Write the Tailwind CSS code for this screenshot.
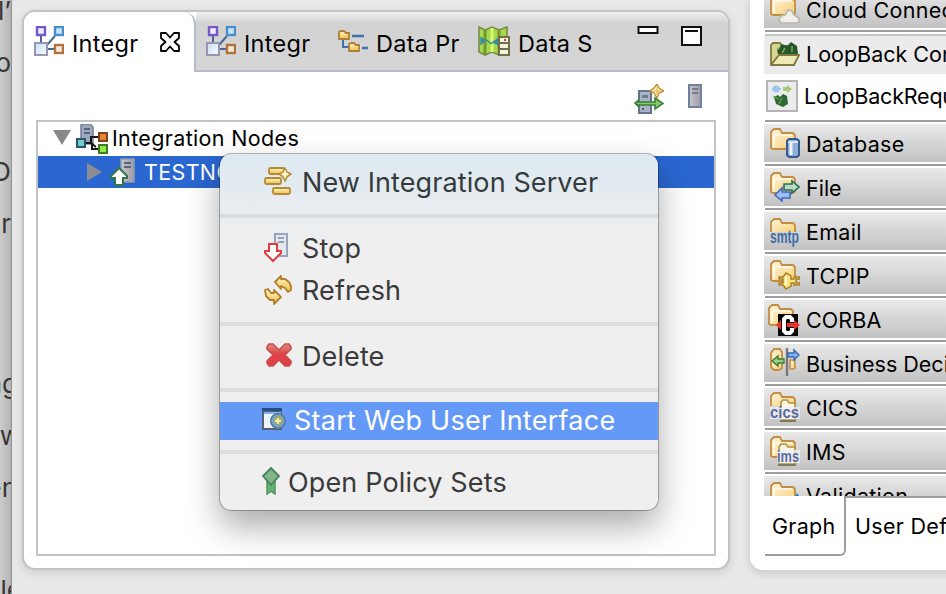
<!DOCTYPE html>
<html lang="en">
<head>
<meta charset="utf-8">
<title>Integration Nodes</title>
<script src="https://cdn.jsdelivr.net/npm/@tailwindcss/browser@4"></script>
</head>
<body class="bg-[#e8e8e8]">
<svg width="0" height="0" class="absolute">
  <defs>
    <linearGradient id="gold" x1="0" y1="0" x2="0" y2="1"><stop offset="0" stop-color="#fff8c8"/><stop offset="1" stop-color="#eebd4c"/></linearGradient>
    <linearGradient id="fold" x1="0" y1="0" x2="1" y2="1"><stop offset="0" stop-color="#fff5dc"/><stop offset="1" stop-color="#f5d078"/></linearGradient>
    <linearGradient id="steel" x1="0" y1="0" x2="1" y2="0"><stop offset="0" stop-color="#c3c9d5"/><stop offset=".6" stop-color="#b5abb1"/><stop offset="1" stop-color="#969fb1"/></linearGradient>
    <linearGradient id="red" x1="0" y1="0" x2="0" y2="1"><stop offset="0" stop-color="#df8a80"/><stop offset=".45" stop-color="#df4549"/><stop offset="1" stop-color="#e03d45"/></linearGradient>
    <linearGradient id="pale" x1="0" y1="0" x2="1" y2="1"><stop offset="0" stop-color="#c9def5"/><stop offset="1" stop-color="#fafcff"/></linearGradient>
    <symbol id="nodes" viewBox="0 0 30 30">
      <path d="M7 9V17M13 19L21 10M13 23H21" stroke="#4a6894" stroke-width="2" fill="none"/>
      <rect x="3" y="1" width="8" height="8" fill="#eeeafa" stroke="#7658c4" stroke-width="2.4"/>
      <rect x="21" y="1" width="8" height="8" fill="#c5e4f8" stroke="#4b8dca" stroke-width="2.4"/>
      <rect x="1" y="17" width="12" height="12" fill="url(#pale)" stroke="#9695b2" stroke-width="2"/>
      <rect x="21" y="19" width="8" height="8" fill="#f8e9da" stroke="#b1733c" stroke-width="2.4"/>
    </symbol>
    <symbol id="folder" viewBox="0 0 30 30">
      <path d="M1 20V4L4 1H10L12 5H23L25 7V20L22 21H3Z" fill="url(#fold)" stroke="#c38d45" stroke-width="1.8" stroke-linejoin="round"/>
      <path d="M4 8V19M4 7H22" stroke="#fffaf0" stroke-width="1.6"/>
    </symbol>
  </defs>
</svg>

<div class="relative flex h-[594px] w-[946px] overflow-hidden bg-[#e8e8e8] font-['Inter',sans-serif] text-black">

  <!-- Document behind the window -->
  <div class="flex w-3 shrink-0 flex-col items-end overflow-hidden border-r border-[#929292] bg-gradient-to-r from-[#cdcdcd] to-[#b4b4b4] text-[26px] leading-[34px] whitespace-nowrap text-[#363636]">
    <div class="-mt-[6px] h-[52px] shrink-0">l’</div>
    <div class="h-[109px] shrink-0">o</div>
    <div class="h-[52px] shrink-0">O</div>
    <div class="h-[160px] shrink-0"><span class="text-[#28426d]">o</span>r</div>
    <div class="-mr-[7px] h-[52px] shrink-0"><span class="text-[#28426d]">n</span>g</div>
    <div class="-mr-[10px] h-[52px] shrink-0"><span class="text-[#3f79aa]">o</span>w</div>
    <div class="-mr-[6px] h-[102px] shrink-0"><span class="text-[#3f79aa]">e</span>n</div>
    <div class="-mr-[11px] shrink-0">le</div>
  </div>

  <!-- Integration view -->
  <section class="mt-[10px] ml-[10px] flex h-[560px] w-[708px] shrink-0 flex-col overflow-hidden rounded-[13px] border-2 border-[#c3c4bf] bg-white shadow-[0_3px_8px_rgba(0,0,0,0.12)]">
    <div class="flex h-[60px] shrink-0 text-[23.5px] whitespace-nowrap">
      <div class="flex w-[172px] shrink-0 items-start rounded-tr-[12px] border-r-2 border-[#b7bbce] bg-white pl-[10px]">
        <svg class="mt-[14px] h-[30px] w-[30px]"><use href="#nodes"/></svg>
        <span class="mt-[14px] ml-2 w-[78px] tracking-[0.3px]">Integr</span>
        <svg class="mt-[20px] ml-[10px]" width="20" height="20" viewBox="0 0 20 20"><path d="M1 1H6L10 5.5L14 1H19V6L14.5 10L19 14V19H14L10 14.5L6 19H1V14L5.5 10L1 6Z" fill="#fff" stroke="#000" stroke-width="1.8" stroke-linejoin="round"/></svg>
      </div>
      <div class="flex flex-1 items-start border-b-2 border-[#b7bbce] bg-gradient-to-b from-[#f0f0f0] via-[#d2d2d2] via-20% to-[#d6d6d6] pl-[10px]">
        <svg class="mt-[14px] h-[30px] w-[30px]"><use href="#nodes"/></svg>
        <span class="mt-[14px] ml-2 w-[94px] tracking-[0.3px]">Integr</span>
        <svg class="mt-[18px]" width="30" height="22" viewBox="0 1 30 22">
          <path d="M5 11V18H12" fill="none" stroke="#3f72ab" stroke-width="2"/>
          <path d="M14 7H26M24 19H30" stroke="#3f72ab" stroke-width="2.4"/>
          <path d="M1 3L3 2H6L8 4H11V10H1Z" fill="url(#gold)" stroke="#ae7e38" stroke-width="1.8"/>
          <path d="M11 15L13 14H16L18 16H21V22H11Z" fill="url(#gold)" stroke="#ae7e38" stroke-width="1.8"/>
        </svg>
        <span class="mt-[14px] ml-2 w-[102px] tracking-[0.3px]">Data Pr</span>
        <svg class="mt-[14px]" width="32" height="30" viewBox="0 0 32 30">
          <path d="M1 1L7 4L14 1L21 4L29 1V26L21 29L14 26L7 29L1 26Z" fill="#a8d84c" stroke="#7a8b49" stroke-width="1.6"/>
          <path d="M7 4V28M21 4V28" stroke="#74992f" stroke-width="3"/><path d="M14 2V26" stroke="#d5fb72" stroke-width="3"/>
          <path d="M3 11V18L8 14L14 18M14 17L21 12V19L15 16" fill="#348ea0" stroke="#348ea0" stroke-width="1.5"/>
          <rect x="21" y="11" width="10" height="18" fill="#f4f2df" stroke="#716f4b" stroke-width="2"/>
          <path d="M21 17H31M21 23H31" stroke="#716f4b" stroke-width="2"/><path d="M26 14H28" stroke="#d23a30" stroke-width="2"/>
        </svg>
        <span class="mt-[14px] ml-2 w-[119px] tracking-[0.3px]">Data S</span>
        <svg class="mt-[14px]" width="65" height="22" viewBox="0 0 65 22"><path d="M1.5 1H20.5V7H1.5Z" fill="#fff" stroke="#111" stroke-width="2"/><path d="M45 1H64V19H45Z" fill="#fff" stroke="#111" stroke-width="2"/><path d="M48 5H61" stroke="#111" stroke-width="2"/></svg>
      </div>
    </div>

    <div class="flex h-[48px] shrink-0 items-start justify-end gap-[24px] pt-[12px] pr-[26px]">
      <svg width="30" height="30" viewBox="0 0 30 30">
        <path d="M5 7H17V29H5Z" fill="#a9b4c8" stroke="#65738c" stroke-width="2"/><path d="M8 11H14V14H8Z" fill="#737b90"/><path d="M8 25H10" stroke="#535d75" stroke-width="2"/>
        <path d="M1 19L4 16.5V18H21V14L29 19.5L21 25V21H4V22Z" fill="#8bc765" stroke="#36803c" stroke-width="1.6"/>
        <path d="M23 0L25 4L30 7L25 9L23 14L20 9L16 7L20 4Z" fill="#fff1be" stroke="#bb9036" stroke-width="1.4"/><path d="M23 3V11M19 7H27" stroke="#dfb14b"/>
      </svg>
      <svg width="14" height="24" viewBox="0 0 14 24"><path d="M1 1H13V23H1Z" fill="url(#steel)" stroke="#71809b" stroke-width="2"/><path d="M4 5H10M4 9H10" stroke="#596985" stroke-width="1.6"/></svg>
    </div>

    <div class="mx-3 h-[436px] shrink-0 border-2 border-[#c3c3c3] bg-white text-[21.5px] tracking-[0.35px] whitespace-nowrap">
      <div class="flex h-[34px] items-start pl-[15px]">
        <svg class="mt-2" width="18" height="15" viewBox="0 0 18 15"><path d="M0 0H18L9 15Z" fill="#888"/></svg>
        <svg class="mt-[2px] ml-[5px]" width="32" height="30" viewBox="0 0 32 30">
          <path d="M5 1L8 0H14L17 3V20H5Z" fill="#9da7ba" stroke="#76839b" stroke-width="1.6"/><path d="M8 5H14M8 9H14" stroke="#56647f" stroke-width="1.8"/>
          <path d="M9 19H15V13H23M16 19V25H23M15 19L20 23" fill="none" stroke="#151515" stroke-width="2"/>
          <rect x="1" y="15" width="8" height="8" fill="#77cbc7" stroke="#28546f" stroke-width="2"/>
          <rect x="23" y="9" width="8" height="8" fill="#df8537" stroke="#7f431b" stroke-width="2"/>
          <rect x="23" y="21" width="8" height="8" fill="#94e846" stroke="#3d7a24" stroke-width="2"/>
        </svg>
        <span class="ml-[4px] leading-[33px]">Integration Nodes</span>
      </div>
      <div class="flex h-[32px] items-start bg-[#2a67d1] pl-[49px] text-white">
        <svg class="mt-[7px]" width="15" height="18" viewBox="0 0 15 18"><path d="M0 0V18L15 9Z" fill="#8b8d93"/></svg>
        <svg class="mt-[2px] ml-[8px]" width="25" height="28" viewBox="0 0 25 28">
          <path d="M11 1H24V24H11Z" fill="url(#steel)" stroke="#8e9aae" stroke-width="1.6"/><path d="M14 5H21M14 9H21" stroke="#58667d" stroke-width="1.8"/>
          <path d="M9 10L17 18V20H13V27H5V20H1V18Z" fill="#fff" stroke="#337348" stroke-width="2"/>
        </svg>
        <span class="ml-[9px] leading-[33px]">TESTNODE</span>
      </div>
    </div>
  </section>

  <!-- Palette -->
  <section class="ml-5 flex h-[570px] w-[210px] shrink-0 flex-col overflow-hidden rounded-bl-[13px] bg-white pl-[14px] shadow-[0_3px_7px_2px_rgba(0,0,0,0.10)]">
    <div class="h-[496px] shrink-0 overflow-hidden text-[21.5px] leading-[40px] tracking-[0.3px] whitespace-nowrap">
      <div class="-mt-[10px] flex h-[38px] bg-gradient-to-b from-[#e9e9e9] to-[#c2c2c2] pl-[6px]">
        <svg class="mt-[4px] shrink-0" width="30" height="30" viewBox="0 0 30 30"><use href="#folder" width="30" height="30"/><path d="M11 29L9 26L11 22L15 21L18 16L22 17L24 21L29 24V28L27 29Z" fill="#f0f0e8" stroke="#b8b8ae" stroke-width="1.6"/></svg>
        <span class="ml-[6px]">Cloud Connectors</span>
      </div>
      <div class="mt-[2px] mb-[2px] ml-px h-[2px] bg-[#9d9d9d]"></div>
      <div class="ml-px h-[2px] bg-[#c6c6c6]"></div>
      <div class="flex h-[38px] bg-[#ebebeb] pl-[6px]">
        <svg class="mt-[6px] shrink-0" width="30" height="24" viewBox="0 0 30 24"><path d="M1 22V3L3 1H10L12 4H24V12" fill="#d8d692" stroke="#81783e" stroke-width="1.8"/><path d="M7 8L12 2L17 4L21 0L27 4L28 12H8Z" fill="#24582a"/><path d="M7 8L10 5M12 11L15 6M22 4V10" stroke="#8da657" stroke-width="1.5"/><path d="M1 23L9 13H29L24 23Z" fill="#efeab5" stroke="#81783e" stroke-width="1.8"/></svg>
        <span class="ml-[6px] leading-[37px] tracking-[0px]">LoopBack Connectors</span>
      </div>
      <div class="flex h-[46px] pl-[2px]">
        <svg class="mt-[6px] shrink-0" width="32" height="32" viewBox="0 0 32 32"><path d="M1 1H31V31H1Z" fill="#ececec" stroke="#b4b4b4" stroke-width="2"/><circle cx="10" cy="9" r="3.5" fill="#9bc5ef"/><path d="M6 9H15" stroke="#9bc5ef" stroke-width="2"/><path d="M17 7H21V5L26 9L21 13V11H17Z" fill="#a5cc79"/><path d="M8 17L12 15L14 17L17 14L21 16L22 24L17 27L10 24Z" fill="#2e6833"/><path d="M7 16L13 19M13 24L16 18" stroke="#6ba356" stroke-width="1.2"/></svg>
        <span class="ml-[6px] leading-[45px] tracking-[-0.2px]">LoopBackRequest</span>
      </div>
      <div class="mb-[2px] ml-px h-[2px] bg-[#9d9d9d]"></div>

      <div class="flex h-[38px] bg-gradient-to-b from-[#e9e9e9] to-[#c2c2c2] pl-[6px]">
        <svg class="mt-[4px] shrink-0" width="30" height="30" viewBox="0 0 30 30"><use href="#folder" width="30" height="30"/><path d="M17 13L19 11H27L29 13V27L27 29H19L17 27Z" fill="#8fb0d6" stroke="#375a93" stroke-width="2"/><path d="M21 15V27" stroke="#edf5fb" stroke-width="3"/><path d="M18 14H28" stroke="#dbe7f4" stroke-width="2"/></svg>
        <span class="ml-[6px]">Database</span>
      </div>
      <div class="mt-[2px] mb-[2px] ml-px h-[2px] bg-[#9d9d9d]"></div>

      <div class="flex h-[38px] bg-gradient-to-b from-[#e9e9e9] to-[#c2c2c2] pl-[6px]">
        <svg class="mt-[4px] shrink-0" width="30" height="30" viewBox="0 0 30 30"><use href="#folder" width="30" height="30"/><path d="M14 12H22V9L29 15L22 21V18H14Z" fill="#b9ddc2" stroke="#2e6c52" stroke-width="1.6"/><path d="M20 20H12V16L5 23L12 29V26H20Z" fill="#9bc0f4" stroke="#4366c1" stroke-width="1.6"/></svg>
        <span class="ml-[6px] tracking-[0px]">File</span>
      </div>
      <div class="mt-[2px] mb-[2px] ml-px h-[2px] bg-[#9d9d9d]"></div>

      <div class="flex h-[38px] bg-gradient-to-b from-[#e9e9e9] to-[#c2c2c2] pl-[6px]">
        <svg class="mt-[6px] shrink-0" width="30" height="30" viewBox="0 0 30 30"><path d="M1 14V4L4 1H10L12 5H23L25 7V14" fill="url(#fold)" stroke="#c38d45" stroke-width="1.8"/><text x="0" y="25" font-family="Liberation Sans" font-weight="bold" font-size="18" letter-spacing="0" textLength="29" lengthAdjust="spacingAndGlyphs" fill="#3d6da6">smtp</text></svg>
        <span class="ml-[6px]">Email</span>
      </div>
      <div class="mt-[2px] mb-[2px] ml-px h-[2px] bg-[#9d9d9d]"></div>

      <div class="flex h-[38px] bg-gradient-to-b from-[#e9e9e9] to-[#c2c2c2] pl-[6px]">
        <svg class="mt-[4px] shrink-0" width="30" height="30" viewBox="0 0 30 30"><use href="#folder" width="30" height="30"/><path d="M9 17H13L16 13L21 16V19H24V17H30V19H26V23H30V25H24V23H21V26L16 29L13 25H9V23H13V19H9Z" fill="#f8e37d" stroke="#a77d23" stroke-width="1.4"/><path d="M16 16V25" stroke="#fffbd8" stroke-width="2"/></svg>
        <span class="ml-[6px]">TCPIP</span>
      </div>
      <div class="mt-[2px] mb-[2px] ml-px h-[2px] bg-[#9d9d9d]"></div>

      <div class="flex h-[38px] bg-gradient-to-b from-[#e9e9e9] to-[#c2c2c2] pl-[4px]">
        <svg class="mt-[4px] shrink-0" width="32" height="32" viewBox="0 0 32 32"><use href="#folder" width="30" height="30"/><rect x="10" y="10" width="20" height="22" fill="#080808"/><path d="M8 21L13 16V26Z" fill="#ec3227"/><path d="M24 18V15L22 13H18L16 15V27L18 29H22L24 27V24" fill="none" stroke="#fff" stroke-width="4"/><path d="M19 19H26V16L32 21L26 26V23H19Z" fill="#ec3227"/></svg>
        <span class="ml-[6px] tracking-[0.1px]">CORBA</span>
      </div>
      <div class="mt-[2px] mb-[2px] ml-px h-[2px] bg-[#9d9d9d]"></div>

      <div class="flex h-[38px] bg-gradient-to-b from-[#e9e9e9] to-[#c2c2c2] pl-[6px]">
        <svg class="mt-[4px] shrink-0" width="30" height="30" viewBox="0 0 30 30"><path d="M1 19V5L4 1H10L12 4V20L9 22H4Z" fill="url(#fold)" stroke="#c38d45" stroke-width="1.8"/><path d="M20 12H25V20L23 21H20Z" fill="url(#fold)" stroke="#c38d45" stroke-width="1.6"/><path d="M17 0V28" stroke="#777" stroke-width="2.4"/><path d="M14 11H8V8L2 13L8 18V15H14Z" fill="#a1cf85" stroke="#397b36" stroke-width="1.4"/><path d="M18 5H24V2L29 7L24 12V9H18Z" fill="#82b2eb" stroke="#336eb6" stroke-width="1.4"/></svg>
        <span class="ml-[6px] tracking-[0px]">Business Decision</span>
      </div>
      <div class="mt-[2px] mb-[2px] ml-px h-[2px] bg-[#9d9d9d]"></div>

      <div class="flex h-[38px] bg-gradient-to-b from-[#e9e9e9] to-[#c2c2c2] pl-[6px]">
        <svg class="mt-[4px] shrink-0" width="30" height="30" viewBox="0 0 30 30"><path d="M1 14V4L4 1H10L12 5H23L25 7V14" fill="url(#fold)" stroke="#c38d45" stroke-width="1.8"/><path d="M11 15V10L13 8H17L19 11H25V28H11" fill="#faf6e5" stroke="#b39243" stroke-width="1.6"/><path d="M10 29H26" stroke="#807a5a" stroke-width="2"/><rect x="0" y="15" width="30" height="12" fill="#f0f0ef" fill-opacity=".7"/><text x="0" y="26" font-family="Liberation Sans" font-weight="bold" font-size="17" letter-spacing="0" textLength="29" lengthAdjust="spacingAndGlyphs" fill="#586ba3">cics</text></svg>
        <span class="ml-[6px]">CICS</span>
      </div>
      <div class="mt-[2px] mb-[2px] ml-px h-[2px] bg-[#9d9d9d]"></div>

      <div class="flex h-[38px] bg-gradient-to-b from-[#e9e9e9] to-[#c2c2c2] pl-[6px]">
        <svg class="mt-[4px] shrink-0" width="30" height="30" viewBox="0 0 30 30"><use href="#folder" width="30" height="30"/><path d="M9 28V11L11 8H16L18 11H25V28Z" fill="#f6f3e6" stroke="#b39243" stroke-width="1.6"/><path d="M8 29H26" stroke="#807a5a" stroke-width="2"/><rect x="7" y="14" width="23" height="13" fill="#f0f0ef" fill-opacity=".8"/><text x="7" y="26" font-family="Liberation Sans" font-weight="bold" font-size="17" letter-spacing="0" textLength="22" lengthAdjust="spacingAndGlyphs" fill="#586ba3">ims</text></svg>
        <span class="ml-[6px]">IMS</span>
      </div>
      <div class="mt-[2px] mb-[2px] ml-px h-[2px] bg-[#9d9d9d]"></div>

      <div class="flex h-[38px] bg-gradient-to-b from-[#e9e9e9] to-[#c2c2c2] pl-[6px]">
        <svg class="mt-[6px] shrink-0" width="30" height="30" viewBox="0 0 30 30"><use href="#folder" width="30" height="30"/><path d="M24 15L27 11L30 15V20H24Z" fill="#3986cf"/></svg>
        <span class="ml-[6px]">Validation</span>
      </div>
    </div>
    <div class="flex h-[60px] shrink-0 text-[21.5px] tracking-[0.3px] whitespace-nowrap">
      <div class="ml-px h-[60px] w-[81px] shrink-0 rounded-br-[6px] border-r-2 border-b-2 border-[#9d9d9d] pl-[7px] leading-[61px]">Graph</div>
      <div class="flex-1 border-t-2 border-[#9d9d9d] pl-[9px] leading-[57px]">User Defined</div>
    </div>
  </section>

  <!-- Context menu -->
  <div class="absolute top-[154px] left-[220px] flex h-[356px] w-[438px] flex-col overflow-hidden rounded-[11px] bg-[#efefef] bg-gradient-to-b from-[#dde9f1] via-[#efefef] via-26% to-[#efefef] text-[27px] tracking-[0.1px] whitespace-nowrap text-[#3a3a3a] shadow-[0_0_0_1px_rgba(0,0,0,0.28),0_16px_34px_rgba(0,0,0,0.34)]">
    <div class="flex h-[60px] shrink-0 items-start pl-[44px] leading-[58px]">
      <svg class="mt-[13px]" width="28" height="28" viewBox="0 0 28 28"><g fill="url(#gold)" stroke="#b58a35" stroke-width="1.8"><rect x="5" y="1" width="15" height="6" rx="1.5"/><rect x="1" y="11" width="16" height="6" rx="1.5"/><rect x="9" y="21" width="17" height="6" rx="1.5"/><path d="M21 1L23 5L27 7L23 10L21 14L19 10L15 7L19 5Z" stroke-width="1.4"/></g><path d="M21 4V11M18 7H24" stroke="#fffbe1" stroke-width="1.6"/></svg>
      <span class="ml-[10px] text-[#333b3e]">New Integration Server</span>
    </div>
    <div class="h-1 shrink-0 bg-black/7"></div>
    <div class="flex h-[51px] shrink-0 items-start pt-[9px] pl-[44px] leading-[44px]">
      <svg class="mt-[6px]" width="28" height="30" viewBox="0 0 28 30"><path d="M11 1H23V23H11Z" fill="#e3e7ee" stroke="#98a4ba" stroke-width="2"/><path d="M14 5H20M14 9H20" stroke="#7c88a9" stroke-width="1.6"/><path d="M5 11H13V18H17V20L9 28L1 20V18H5Z" fill="#fff" stroke="#df3e3d" stroke-width="2"/></svg>
      <span class="ml-[10px]">Stop</span>
    </div>
    <div class="flex h-[53px] shrink-0 items-start pl-[44px] leading-[44px]">
      <svg class="mt-[6px]" width="28" height="30" viewBox="0 0 28 30"><g fill="url(#gold)" stroke="#b17f2b" stroke-width="1.8" stroke-linejoin="round"><path d="M11 7L17 1V4H21L25 7L27 11V15L24 17L21 13L17 11V14Z"/><path d="M17 22L10 29V25H6L2 21L1 15L4 14L7 18H10V15Z"/></g></svg>
      <span class="ml-[10px]">Refresh</span>
    </div>
    <div class="h-1 shrink-0 bg-black/7"></div>
    <div class="flex h-[62px] shrink-0 items-start pl-[46px] leading-[62px]">
      <svg class="mt-[17px]" width="26" height="24" viewBox="0 0 26 24"><path d="M3 1H7L13 7L19 1H23L25 4V6L19 12L25 18V20L23 23H19L13 17L7 23H3L1 20V18L7 12L1 6V4Z" fill="url(#red)" stroke="#c64f4e" stroke-width="1.6" stroke-linejoin="round"/></svg>
      <span class="ml-[10px]">Delete</span>
    </div>
    <div class="h-1 shrink-0 bg-black/7"></div>
    <div class="my-[10px] flex h-[38px] shrink-0 items-start bg-[#6599f7] pl-[42px] leading-[37px] tracking-[0.25px] text-white">
      <svg class="mt-[6px]" width="24" height="22" viewBox="0 0 24 22"><path d="M1 3H19V21H1Z" fill="#edf5ff" stroke="#596070" stroke-width="2"/><path d="M0 1.5H20" stroke="#24508a" stroke-width="3"/><path d="M2 5H19" stroke="#7eb0ec" stroke-width="2"/><circle cx="16" cy="13" r="7.2" fill="#7aa4cb" stroke="#55799b" stroke-width="1.6"/><path d="M13 9L18 8L21 13L17 18L12 14Z" fill="#a3aa55"/><path d="M16 10V16M13 13H19" stroke="#efedb1" stroke-width="2"/></svg>
      <span class="ml-[8px]">Start Web User Interface</span>
    </div>
    <div class="h-1 shrink-0 bg-black/7"></div>
    <div class="flex h-[56px] shrink-0 items-start pl-[42px] leading-[58px] tracking-[0.15px]">
      <svg class="mt-[13px]" width="18" height="28" viewBox="0 0 18 28"><path d="M5 14V27L9 24L13 27V14Z" fill="#67b172" stroke="#549c62" stroke-width="1.6"/><path d="M9 1L17 9L9 18L1 9Z" fill="#83b58b" stroke="#43845a" stroke-width="1.8"/></svg>
      <span class="ml-[8px]">Open Policy Sets</span>
    </div>
  </div>
</div>
</body>
</html>
